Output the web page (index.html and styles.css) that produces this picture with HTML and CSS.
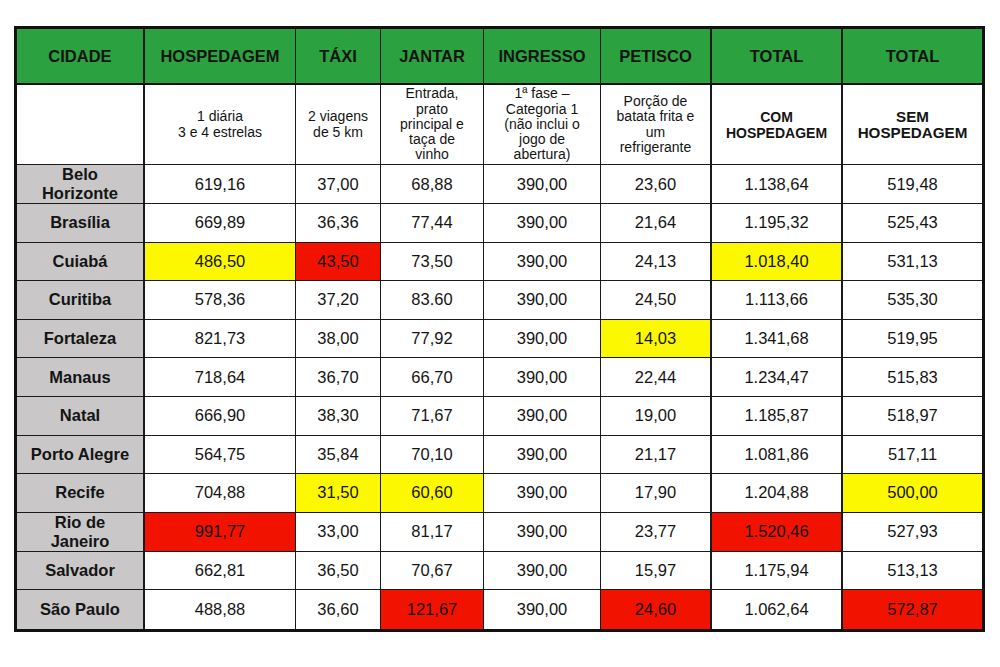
FILE: index.html
```html
<!DOCTYPE html>
<html lang="pt">
<head>
<meta charset="utf-8">
<title>Custos por cidade</title>
<link rel="stylesheet" href="styles.css">
</head>
<body>
<div class="wrap">
<table class="costs">
  <thead>
    <tr class="head">
      <th class="c1">CIDADE</th>
      <th class="c2">HOSPEDAGEM</th>
      <th class="c3">TÁXI</th>
      <th class="c4">JANTAR</th>
      <th class="c5">INGRESSO</th>
      <th class="c6 thick">PETISCO</th>
      <th class="c7 thick">TOTAL</th>
      <th class="c8 last">TOTAL</th>
    </tr>
    <tr class="sub">
      <td class="city-blank thick"></td>
      <td>1 diária<br>3 e 4 estrelas</td>
      <td>2 viagens<br>de 5 km</td>
      <td>Entrada,<br>prato<br>principal e<br>taça de<br>vinho</td>
      <td>1ª fase –<br>Categoria 1<br>(não inclui o<br>jogo de<br>abertura)</td>
      <td class="thick">Porção de<br>batata frita e<br>um<br>refrigerante</td>
      <td class="thick strong com">COM<br>HOSPEDAGEM</td>
      <td class="last strong sem">SEM<br>HOSPEDAGEM</td>
    </tr>
  </thead>
  <tbody>
    <tr><th class="city">Belo<br>Horizonte</th><td>619,16</td><td>37,00</td><td>68,88</td><td>390,00</td><td class="thick">23,60</td><td class="thick">1.138,64</td><td class="last">519,48</td></tr>
    <tr><th class="city">Brasília</th><td>669,89</td><td>36,36</td><td>77,44</td><td>390,00</td><td class="thick">21,64</td><td class="thick">1.195,32</td><td class="last">525,43</td></tr>
    <tr><th class="city">Cuiabá</th><td class="yellow">486,50</td><td class="red">43,50</td><td>73,50</td><td>390,00</td><td class="thick">24,13</td><td class="thick yellow">1.018,40</td><td class="last">531,13</td></tr>
    <tr><th class="city">Curitiba</th><td>578,36</td><td>37,20</td><td>83.60</td><td>390,00</td><td class="thick">24,50</td><td class="thick">1.113,66</td><td class="last">535,30</td></tr>
    <tr><th class="city">Fortaleza</th><td>821,73</td><td>38,00</td><td>77,92</td><td>390,00</td><td class="thick yellow">14,03</td><td class="thick">1.341,68</td><td class="last">519,95</td></tr>
    <tr><th class="city">Manaus</th><td>718,64</td><td>36,70</td><td>66,70</td><td>390,00</td><td class="thick">22,44</td><td class="thick">1.234,47</td><td class="last">515,83</td></tr>
    <tr><th class="city">Natal</th><td>666,90</td><td>38,30</td><td>71,67</td><td>390,00</td><td class="thick">19,00</td><td class="thick">1.185,87</td><td class="last">518,97</td></tr>
    <tr><th class="city">Porto Alegre</th><td>564,75</td><td>35,84</td><td>70,10</td><td>390,00</td><td class="thick">21,17</td><td class="thick">1.081,86</td><td class="last">517,11</td></tr>
    <tr><th class="city">Recife</th><td>704,88</td><td class="yellow">31,50</td><td class="yellow">60,60</td><td>390,00</td><td class="thick">17,90</td><td class="thick">1.204,88</td><td class="last yellow">500,00</td></tr>
    <tr><th class="city">Rio de<br>Janeiro</th><td class="red">991,77</td><td>33,00</td><td>81,17</td><td>390,00</td><td class="thick">23,77</td><td class="thick red">1.520,46</td><td class="last">527,93</td></tr>
    <tr><th class="city">Salvador</th><td>662,81</td><td>36,50</td><td>70,67</td><td>390,00</td><td class="thick">15,97</td><td class="thick">1.175,94</td><td class="last">513,13</td></tr>
    <tr class="final"><th class="city">São Paulo</th><td>488,88</td><td>36,60</td><td class="red">121,67</td><td>390,00</td><td class="thick red">24,60</td><td class="thick">1.062,64</td><td class="last red">572,87</td></tr>
  </tbody>
</table>
</div>
</body>
</html>
```

FILE: styles.css
```css
html, body {
  margin: 0;
  padding: 0;
  background: #ffffff;
}

.wrap {
  padding: 26px 0 0 14px;
}

.costs {
  box-sizing: border-box;
  width: 971px;
  table-layout: fixed;
  border-collapse: separate;
  border-spacing: 0;
  border: 3px solid #111;
  font-family: "Liberation Sans", Arial, Helvetica, sans-serif;
  color: #141414;
}

.costs th,
.costs td {
  box-sizing: border-box;
  padding: 0 3px;
  text-align: center;
  vertical-align: middle;
  border-right: 1px solid #1a1a1a;
  border-bottom: 1px solid #1a1a1a;
  font-size: 16.5px;
  line-height: 19px;
}

.costs td {
  font-weight: normal;
}

.costs .thick {
  border-right-width: 2px;
}

.costs .last {
  border-right: none;
}

.costs tr.final th,
.costs tr.final td {
  border-bottom: none;
}

.c1 { width: 128px; }
.c2 { width: 151px; }
.c3 { width: 85px; }
.c4 { width: 103px; }
.c5 { width: 117px; }
.c6 { width: 111px; }
.c7 { width: 131px; }
.c8 { width: 139px; }

.costs tr.head th {
  height: 56px;
  background: #2ba13f;
  font-weight: bold;
  border-bottom: 2px solid #111;
}

.costs th.c1 {
  border-right-width: 2px;
}

.costs tr.sub td {
  height: 80px;
  font-size: 14px;
  line-height: 15.3px;
  padding: 0 2px;
}

.costs tr.sub td.strong {
  font-weight: bold;
  line-height: 16px;
}

.costs tr.sub td.com {
  font-size: 14px;
}

.costs tr.sub td.sem {
  font-size: 15.2px;
}

.costs tbody td,
.costs tbody th {
  height: 38.6px;
}

.costs th.city {
  background: #c9c7c7;
  font-weight: bold;
  border-right-width: 2px;
}

.costs .city-blank {
  background: #ffffff;
  border-right-width: 2px;
}

.costs .yellow {
  background: #fcf802;
}

.costs .red {
  background: #f11200;
}
```
